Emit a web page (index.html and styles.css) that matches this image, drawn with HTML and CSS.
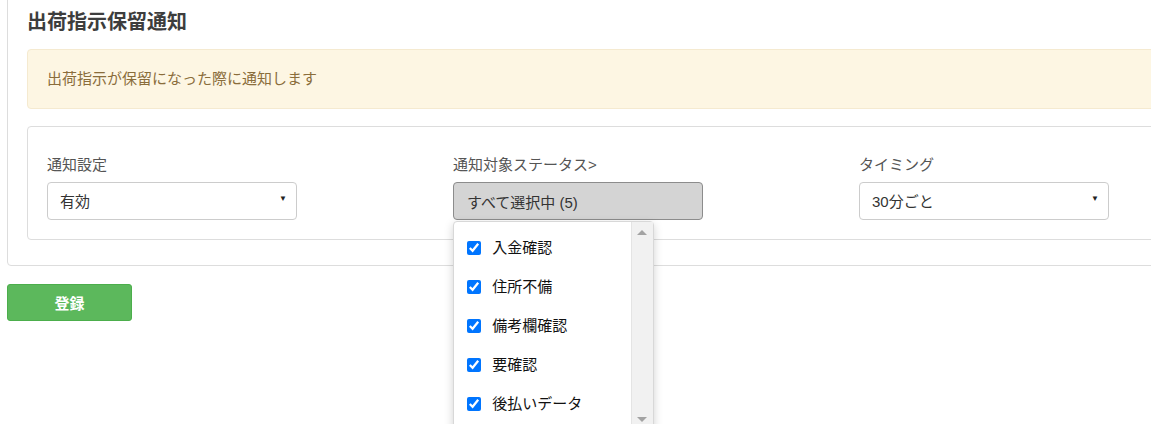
FILE: index.html
```html
<!DOCTYPE html>
<html lang="ja">
<head>
    <meta charset="UTF-8">
    <title>出荷指示保留通知</title>
    <link rel="stylesheet" href="styles.css">
</head>
<body>
    <div class="panel">
        <h3 class="panel-title">出荷指示保留通知</h3>
        <div class="alert">出荷指示が保留になった際に通知します</div>

        <div class="setting-box">
            <div class="setting-row">
                <div class="col">
                    <label class="field-label">通知設定</label>
                    <div class="select-wrap">
                        <select class="form-select">
                            <option>有効</option>
                            <option>無効</option>
                        </select>
                    </div>
                </div>
                <div class="col">
                    <label class="field-label">通知対象ステータス&gt;</label>
                    <div class="multi">
                        <button class="multi-btn" type="button">すべて選択中 (5)</button>
                        <div class="multi-menu">
                            <ul class="multi-list">
                                <li><label><input type="checkbox" checked> 入金確認</label></li>
                                <li><label><input type="checkbox" checked> 住所不備</label></li>
                                <li><label><input type="checkbox" checked> 備考欄確認</label></li>
                                <li><label><input type="checkbox" checked> 要確認</label></li>
                                <li><label><input type="checkbox" checked> 後払いデータ</label></li>
                            </ul>
                            <div class="fake-scroll">
                                <span class="arrow-up"></span>
                                <span class="arrow-down"></span>
                            </div>
                        </div>
                    </div>
                </div>
                <div class="col">
                    <label class="field-label">タイミング</label>
                    <div class="select-wrap">
                        <select class="form-select">
                            <option>30分ごと</option>
                            <option>1時間ごと</option>
                        </select>
                    </div>
                </div>
            </div>
        </div>
    </div>

    <button class="btn-submit" type="button">登録</button>
</body>
</html>
```

FILE: styles.css
```css
html {
    overflow: hidden;
}
body {
    margin: 0;
    min-height: 424px;
    font-family: "Liberation Sans", "Noto Sans CJK JP", sans-serif;
    font-size: 15px;
    color: #333;
    width: 1400px;
}
.panel {
    margin: -20px 0 0 7px;
    padding: 29px 19px 25px 19px;
    border: 1px solid #ddd;
    border-radius: 4px;
    background: #fff;
}
.panel-title {
    margin: 0 0 15px 0;
    font-size: 20px;
    line-height: 24px;
    font-weight: bold;
    color: #3d3d3d;
}
.alert {
    padding: 19px;
    line-height: 20px;
    background-color: #fdf6e3;
    border: 1px solid #f5ead0;
    border-radius: 4px;
    color: #8a6d3b;
    margin-bottom: 17px;
}
.setting-box {
    border: 1px solid #ddd;
    border-radius: 4px;
    padding: 28px 19px 19px 19px;
}
.setting-row {
    display: grid;
    grid-template-columns: 406px 406px 406px;
}
.field-label {
    display: block;
    line-height: 20px;
    color: #555;
    margin-bottom: 7px;
}
.select-wrap {
    position: relative;
    width: 250px;
}
.select-wrap::after {
    content: "▼";
    position: absolute;
    right: 10px;
    top: 12px;
    font-size: 8px;
    color: #222;
    pointer-events: none;
}
.form-select {
    appearance: none;
    -webkit-appearance: none;
    width: 250px;
    height: 38px;
    padding: 0 12px;
    border: 1px solid #ccc;
    border-radius: 4px;
    background: #fff;
    font-family: inherit;
    font-size: 15px;
    color: #333;
}
.multi {
    position: relative;
    width: 250px;
}
.multi-btn {
    width: 250px;
    height: 38px;
    padding: 0 13px;
    text-align: left;
    background-color: #d4d4d4;
    border: 1px solid #8c8c8c;
    border-radius: 4px;
    font-family: inherit;
    font-size: 15px;
    color: #333;
}
.multi-menu {
    position: absolute;
    top: 39px;
    left: 0;
    width: 199px;
    height: 215px;
    display: flex;
    background: #fff;
    border: 1px solid #d8d8d8;
    border-radius: 4px;
    box-shadow: 0 3px 10px rgba(0, 0, 0, 0.18);
    z-index: 10;
}
.multi-list {
    flex: 1;
    list-style: none;
    margin: 0;
    padding: 6px 0 0 0;
}
.multi-list li {
    height: 39px;
    line-height: 39px;
    padding-left: 13px;
    color: #111;
}
.multi-list input {
    width: 14px;
    height: 14px;
    margin: 0 7px 0 0;
    vertical-align: -2px;
    accent-color: #0075ff;
}
.fake-scroll {
    position: relative;
    width: 21px;
    background: #f1f1f1;
    border-left: 1px solid #e4e4e4;
}
.arrow-up, .arrow-down {
    position: absolute;
    left: 5px;
    width: 0;
    height: 0;
    border-left: 5px solid transparent;
    border-right: 5px solid transparent;
}
.arrow-up {
    top: 8px;
    border-bottom: 5px solid #a3a3a3;
}
.arrow-down {
    top: 195px;
    border-top: 5px solid #a3a3a3;
}
.btn-submit {
    display: block;
    margin: 18px 0 0 7px;
    width: 125px;
    height: 37px;
    background-color: #5cb85c;
    border: 1px solid #4cae4c;
    border-radius: 3px;
    color: #fff;
    font-family: inherit;
    font-size: 15px;
    font-weight: bold;
}
```
